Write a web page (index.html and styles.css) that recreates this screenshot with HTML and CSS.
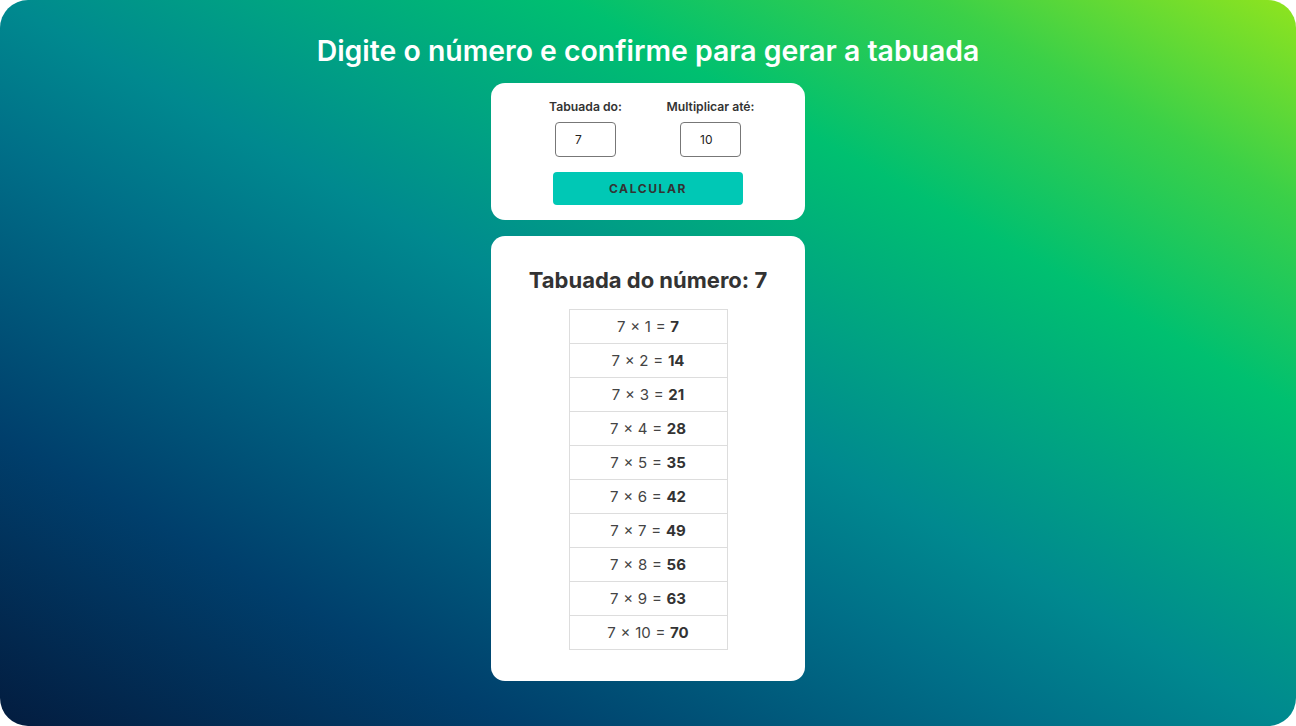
FILE: index.html
```html
<!DOCTYPE html>
<html lang="pt-BR">
<head>
<meta charset="utf-8">
<title>Tabuada</title>
<link rel="stylesheet" href="styles.css">
</head>
<body>
<main class="app">
  <h1 class="title">Digite o número e confirme para gerar a tabuada</h1>
  <section class="card form-card">
    <div class="fields">
      <label class="field">
        <span class="field-label">Tabuada do:</span>
        <input class="field-input" type="text" value="7">
      </label>
      <label class="field">
        <span class="field-label">Multiplicar até:</span>
        <input class="field-input" type="text" value="10">
      </label>
    </div>
    <button class="btn" type="button">CALCULAR</button>
  </section>
  <section class="card result-card">
    <h2 class="result-title">Tabuada do número: 7</h2>
    <table class="table">
      <tbody>
        <tr><td>7 × 1 = <b>7</b></td></tr>
        <tr><td>7 × 2 = <b>14</b></td></tr>
        <tr><td>7 × 3 = <b>21</b></td></tr>
        <tr><td>7 × 4 = <b>28</b></td></tr>
        <tr><td>7 × 5 = <b>35</b></td></tr>
        <tr><td>7 × 6 = <b>42</b></td></tr>
        <tr><td>7 × 7 = <b>49</b></td></tr>
        <tr><td>7 × 8 = <b>56</b></td></tr>
        <tr><td>7 × 9 = <b>63</b></td></tr>
        <tr><td>7 × 10 = <b>70</b></td></tr>
      </tbody>
    </table>
  </section>
</main>
</body>
</html>
```

FILE: styles.css
```css
* { box-sizing: border-box; }
html, body { margin: 0; padding: 0; height: 100%; }
body {
  background: #fff;
  font-family: Inter, "Noto Sans", sans-serif;
}
.app {
  height: 726px;
  border-radius: 28px;
  background: linear-gradient(to top right,
    #031c3f 0%,
    #003f6c 20%,
    #006f88 40%,
    #00898f 50%,
    #00a084 59%,
    #00c070 72%,
    #3bd048 86%,
    #90e41e 100%);
  display: flex;
  flex-direction: column;
  align-items: center;
  padding-top: 33px;
}
.title {
  margin: 0 0 15px;
  color: #fff;
  font-size: 28.4px;
  line-height: 35px;
  font-weight: 600;
  letter-spacing: 0;
}
.card {
  width: 314px;
  background: #fff;
  border-radius: 14px;
}
.form-card {
  padding: 16px 0 15px;
  display: flex;
  flex-direction: column;
  align-items: center;
}
.fields {
  display: flex;
  gap: 25px;
  margin-bottom: 15px;
}
.field {
  width: 100px;
  display: flex;
  flex-direction: column;
  align-items: center;
  gap: 8px;
}
.field-label {
  font-size: 12.2px;
  line-height: 15px;
  font-weight: 600;
  color: #333;
  white-space: nowrap;
}
.field-input {
  width: 61px;
  height: 35px;
  border: 1px solid #777;
  border-radius: 4px;
  padding: 0 0 0 19px;
  font-family: Inter, sans-serif;
  font-size: 12px;
  color: #222;
  background: #fff;
}
.btn {
  width: 190px;
  height: 33px;
  border: none;
  border-radius: 4px;
  background: #00c8b5;
  color: #333;
  font-family: Inter, sans-serif;
  font-size: 12px;
  font-weight: 700;
  letter-spacing: 1.6px;
  padding: 0;
}
.result-card {
  margin-top: 16px;
  padding: 31px 0 31px;
  display: flex;
  flex-direction: column;
  align-items: center;
}
.result-title {
  margin: 0 0 16px;
  font-size: 22px;
  line-height: 26px;
  font-weight: 700;
  color: #333;
}
.table {
  border-collapse: collapse;
  width: 159px;
}
.table td {
  border: 1px solid #ddd;
  text-align: center;
  padding: 7px 0;
  line-height: 19px;
  font-size: 15px;
  color: #444;
  word-spacing: 0.5px;
}
.table td b {
  font-weight: 700;
  color: #333;
}
```
